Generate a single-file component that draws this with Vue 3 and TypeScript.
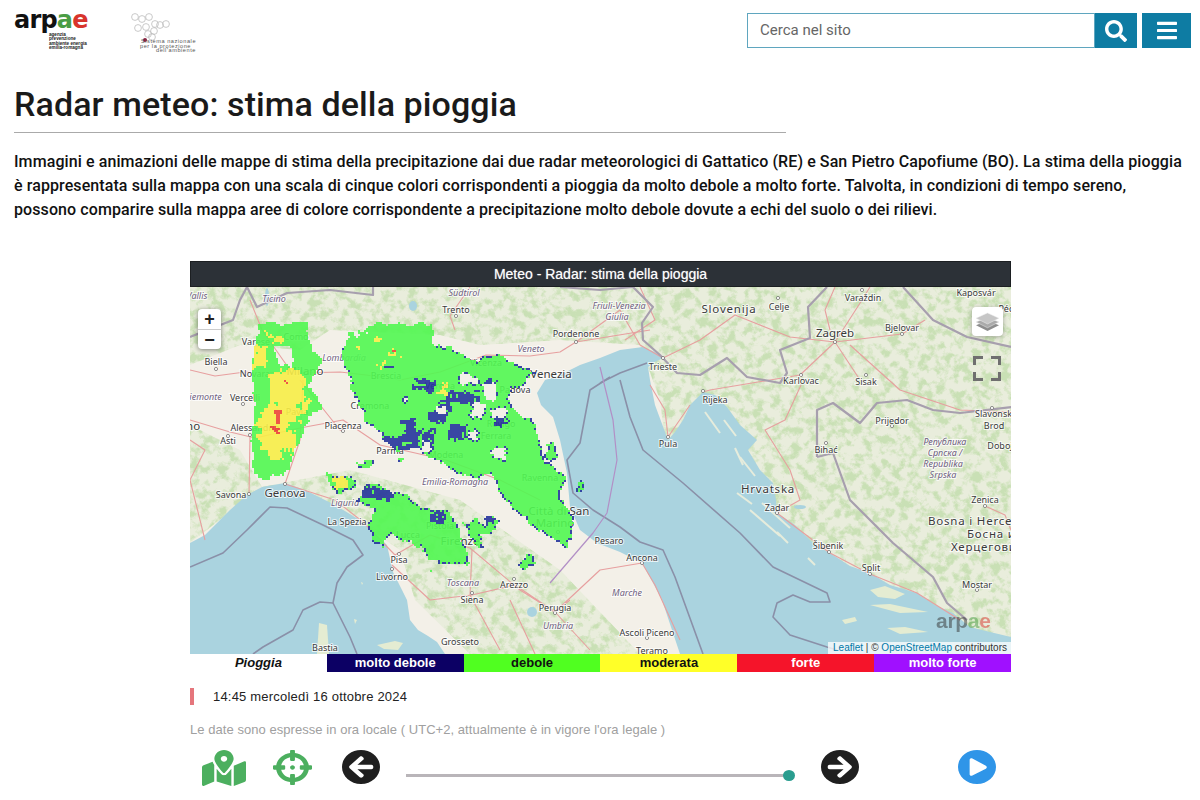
<script setup lang="ts">
type Pt = [number, number]
type Label = { t: string; x: number; y: number; s?: number; i?: boolean; ls?: number; a?: string }

const hash = (i: number, j: number): number => {
  const v = Math.sin(i * 12.9898 + j * 78.233) * 43758.5453
  return v - Math.floor(v)
}
const noise = (x: number, y: number): number => {
  const i = Math.floor(x)
  const j = Math.floor(y)
  const u = x - i
  const v = y - j
  const a = hash(i, j) * (1 - u) + hash(i + 1, j) * u
  const b = hash(i, j + 1) * (1 - u) + hash(i + 1, j + 1) * u
  return a * (1 - v) + b * v
}
const inside = (p: Pt[], x: number, y: number): boolean => {
  let c = false
  for (let k = 0, l = p.length - 1; k < p.length; l = k++) {
    const [xi, yi] = p[k]
    const [xj, yj] = p[l]
    if (yi > y !== yj > y && x < ((xj - xi) * (y - yi)) / (yj - yi) + xi) c = !c
  }
  return c
}
const box = (a: number, b: number, c: number, d: number): Pt[] => [[a, b], [c, b], [c, d], [a, d]]

const greenAreas: Pt[][] = [
  [[257, 323], [305, 323], [310, 347], [322, 360], [307, 380], [317, 400], [320, 410], [307, 418], [292, 460], [283, 475], [265, 478], [252, 470], [252, 357], [256, 340]],
  [[347, 332], [373, 323], [433, 323], [430, 343], [447, 347], [457, 350], [477, 362], [483, 355], [500, 353], [510, 360], [537, 373], [530, 377], [510, 390], [505, 400], [523, 417], [533, 417], [540, 440], [543, 460], [550, 463], [567, 477], [560, 493], [570, 517], [572, 537], [563, 548], [547, 533], [537, 530], [523, 517], [510, 507], [500, 493], [490, 473], [477, 477], [457, 470], [437, 460], [413, 450], [397, 450], [377, 430], [357, 407], [350, 383], [340, 353]],
  [[357, 500], [367, 482], [393, 490], [423, 505], [447, 513], [457, 530], [467, 550], [467, 565], [430, 560], [420, 550], [407, 537], [390, 535], [380, 545], [373, 540], [367, 527], [372, 510]],
  [[463, 523], [473, 518], [483, 522], [487, 513], [497, 517], [492, 530], [480, 533], [482, 548], [475, 547], [470, 538]],
  [[517, 563], [530, 554], [536, 560], [522, 570]],
  box(575, 480, 582, 489),
  box(545, 442, 556, 458),
  [[325, 472], [352, 476], [356, 488], [336, 491]],
  box(357, 460, 372, 467),
  box(397, 457, 403, 463),
  box(426, 568, 432, 572)
]
const holes: Pt[][] = [
  [[273, 343], [290, 345], [292, 367], [281, 365], [275, 355]],
  box(460, 375, 477, 382),
  box(472, 403, 483, 417),
  box(420, 440, 430, 450),
  box(490, 448, 503, 458),
  box(483, 383, 495, 397),
  box(492, 408, 505, 417),
  box(467, 430, 477, 437),
  box(437, 405, 445, 412),
  box(403, 395, 407, 399),
  box(363, 331, 367, 334),
  box(353, 330, 358, 336),
  box(408, 447, 420, 452)
]
const blueAreas: Pt[][] = [
  box(418, 374, 440, 387), box(453, 387, 483, 400), box(433, 407, 450, 417), box(407, 415, 420, 430),
  [[374, 429], [400, 433], [440, 423], [438, 445], [400, 447], [374, 437]],
  box(453, 420, 470, 437), box(388, 360, 396, 364), box(356, 484, 397, 496), box(373, 540, 387, 548),
  box(433, 510, 447, 520), box(483, 510, 497, 517), box(477, 480, 484, 490), box(498, 410, 512, 421), box(492, 377, 502, 386), box(440, 395, 455, 405)
]
const yellowAreas: Pt[][] = [
  [[270, 372], [300, 368], [303, 392], [308, 404], [298, 418], [295, 440], [287, 460], [270, 458], [257, 440], [258, 420], [266, 405]],
  box(253, 344, 266, 366), box(262, 331, 272, 335), box(273, 337, 285, 342),
  box(372, 338, 380, 343), box(387, 349, 397, 354), box(380, 361, 385, 367), box(355, 342, 360, 347), box(439, 381, 445, 393),
  [[327, 473], [346, 478], [348, 487], [334, 486]]
]
const greenInYellow: Pt[][] = [box(272, 398, 276, 402), box(286, 420, 296, 431), box(259, 449, 268, 458), box(282, 448, 288, 458), box(294, 402, 300, 408)]
const redAreas: Pt[][] = [box(275, 408, 280, 422), box(272, 425, 280, 431), box(284, 380, 286, 384), box(390, 350, 395, 352)]

const toPath = (test: (x: number, y: number) => boolean): string => {
  const size = 2
  let d = ''
  for (let y = 320; y < 575; y += size) {
    let start = -1
    for (let x = 248; x <= 590; x += size) {
      const on = x < 590 && test(x, y)
      if (on && start < 0) start = x
      if (!on && start >= 0) {
        d += `M${start} ${y}h${x - start}v${size}h${start - x}z`
        start = -1
      }
    }
  }
  return d
}
const warp = (x: number, y: number): Pt => [
  x + (noise(x / 7, y / 7) - 0.5) * 6 + (noise(x / 2.5, y / 2.5) - 0.5) * 3,
  y + (noise(x / 7 + 40, y / 7 + 17) - 0.5) * 6 + (noise(x / 2.5 + 9, y / 2.5 + 3) - 0.5) * 3
]
const any = (list: Pt[][], x: number, y: number): boolean => list.some((p) => inside(p, x, y))
const isRain = (x: number, y: number): boolean => {
  const [a, b] = warp(x, y)
  return any(greenAreas, a, b) && !any(holes, a, b)
}
const isEdge = (x: number, y: number): boolean =>
  !isRain(x - 2, y) || !isRain(x + 2, y) || !isRain(x, y - 2) || !isRain(x, y + 2)
const isBlue = (x: number, y: number): boolean => {
  if (!isRain(x, y)) return false
  const [a, b] = warp(x + 5, y - 3)
  return (any(blueAreas, a, b) && noise(x / 3, y / 3) > 0.25) || (isEdge(x, y) && y > 345 && x > 330 && hash(x, y) < 0.4)
}
const warp2 = (x: number, y: number): Pt => [x + (noise(x / 4, y / 4) - 0.5) * 9, y + (noise(x / 4 + 9, y / 4 + 3) - 0.5) * 9]
const isYellow = (x: number, y: number): boolean => {
  const [a, b] = warp2(x, y)
  return isRain(x, y) && any(yellowAreas, a, b) && !any(greenInYellow, a, b) && !isBlue(x, y)
}
const radar = {
  green: toPath((x, y) => isRain(x, y) && !isBlue(x, y)),
  blue: toPath(isBlue),
  yellow: toPath(isYellow),
  red: toPath((x, y) => any(redAreas, ...warp(x, y)))
}

const labels: Label[] = [
  { t: 'Vallis', x: 197, y: 299, i: true }, { t: 'Ticino', x: 274, y: 302, i: true }, { t: 'Südtirol', x: 464, y: 296, i: true },
  { t: 'Trento', x: 456, y: 313 }, { t: 'Friuli-Venezia', x: 619, y: 309, i: true }, { t: 'Giulia', x: 617, y: 320, i: true },
  { t: 'Pordenone', x: 576, y: 337 }, { t: 'Veneto', x: 531, y: 352, i: true }, { t: 'Como', x: 296, y: 340 },
  { t: 'Varese', x: 256, y: 345 }, { t: 'Biella', x: 216, y: 365 }, { t: 'Novara', x: 255, y: 377 },
  { t: 'Milano', x: 305, y: 375, s: 11.5 }, { t: 'Lombardia', x: 344, y: 361, i: true }, { t: 'Brescia', x: 386, y: 379 },
  { t: 'Vicenza', x: 486, y: 366 }, { t: 'Verona', x: 440, y: 389 }, { t: 'Padova', x: 515, y: 393 },
  { t: 'Venezia', x: 551, y: 378, s: 11.5 }, { t: 'Piemonte', x: 203, y: 400, i: true }, { t: 'Vercelli', x: 245, y: 401 },
  { t: 'Pavia', x: 297, y: 415 }, { t: 'Cremona', x: 370, y: 409 }, { t: 'Piacenza', x: 343, y: 429 },
  { t: 'Alessandria', x: 255, y: 431 }, { t: 'Torino', x: 183, y: 430, s: 11.5 }, { t: 'Asti', x: 228, y: 444 },
  { t: 'Parma', x: 390, y: 454 }, { t: 'Rovigo', x: 501, y: 427 }, { t: 'Ferrara', x: 496, y: 439 },
  { t: 'Modena', x: 446, y: 458 }, { t: 'Emilia-Romagna', x: 455, y: 485, i: true }, { t: 'Savona', x: 231, y: 498 },
  { t: 'Genova', x: 285, y: 497, s: 11.5 }, { t: 'Liguria', x: 345, y: 506, i: true }, { t: 'La Spezia', x: 347, y: 525 },
  { t: 'Ravenna', x: 540, y: 481 }, { t: 'Pistoia', x: 440, y: 529 }, { t: 'Lucca', x: 408, y: 538 },
  { t: 'Firenze', x: 460, y: 545, s: 11.5 }, { t: 'Città di San', x: 559, y: 515, s: 11.5 }, { t: 'Marino', x: 555, y: 527, s: 11.5 },
  { t: 'Pesaro', x: 609, y: 544 }, { t: 'Pisa', x: 399, y: 563 }, { t: 'Livorno', x: 392, y: 580 },
  { t: 'Toscana', x: 463, y: 586, i: true }, { t: 'Arezzo', x: 514, y: 588 }, { t: 'Siena', x: 472, y: 603 },
  { t: 'Perugia', x: 555, y: 611 }, { t: 'Umbria', x: 558, y: 629, i: true }, { t: 'Grosseto', x: 460, y: 645 },
  { t: 'Bastia', x: 325, y: 651 }, { t: 'Ancona', x: 642, y: 561 }, { t: 'Marche', x: 627, y: 596, i: true },
  { t: 'Ascoli Piceno', x: 647, y: 636 }, { t: 'Teramo', x: 652, y: 654 }, { t: 'Slovenija', x: 729, y: 313, s: 11.5, ls: 0.8 },
  { t: 'Celje', x: 779, y: 310 }, { t: 'Trieste', x: 663, y: 370 }, { t: 'Rijeka', x: 715, y: 403 }, { t: 'Pula', x: 668, y: 447 },
  { t: 'Zagreb', x: 835, y: 337, s: 11.5 }, { t: 'Varaždin', x: 863, y: 301 }, { t: 'Bjelovar', x: 902, y: 331 },
  { t: 'Karlovac', x: 801, y: 384 }, { t: 'Sisak', x: 866, y: 385 }, { t: 'Kaposvár', x: 976, y: 296 }, { t: 'Pécs', x: 1008, y: 312 },
  { t: 'Slavonski', x: 975, y: 417, a: 'start' }, { t: 'Brod', x: 994, y: 429 }, { t: 'Prijedor', x: 892, y: 424 }, { t: 'Bihać', x: 826, y: 453 },
  { t: 'Република', x: 945, y: 445, i: true }, { t: 'Српска /', x: 945, y: 456, i: true }, { t: 'Republika', x: 943, y: 467, i: true },
  { t: 'Srpska', x: 943, y: 478, i: true }, { t: 'Doboj', x: 1000, y: 449 }, { t: 'Zenica', x: 985, y: 503 },
  { t: 'Hrvatska', x: 768, y: 493, s: 11.5, ls: 0.8 }, { t: 'Zadar', x: 777, y: 511 }, { t: 'Šibenik', x: 828, y: 549 }, { t: 'Split', x: 871, y: 571 },
  { t: 'Bosna i Herceg', x: 928, y: 525, s: 11.5, ls: 0.8, a: 'start' }, { t: 'Босна и', x: 967, y: 538, s: 11.5, ls: 0.8, a: 'start' },
  { t: 'Херцегови', x: 951, y: 551, s: 11.5, ls: 0.8, a: 'start' }, { t: 'Mostar', x: 977, y: 588 }
]
const towns: Pt[] = [[456, 316], [576, 342], [216, 369], [243, 404], [343, 431], [228, 436], [250, 435], [249, 494], [285, 484], [399, 554], [392, 569], [514, 579], [472, 593], [555, 613], [642, 563], [647, 638], [663, 358], [668, 437], [703, 391], [778, 298], [835, 342], [862, 290], [902, 334], [801, 375], [866, 375], [992, 408], [892, 426], [826, 443], [777, 513], [829, 552], [870, 574], [985, 506], [977, 590], [558, 532]]

const seaWest = '190,543 205,535 230,510 247,495 262,487 285,483 305,490 335,505 363,522 380,538 387,545 391,563 393,572 402,590 407,600 410,620 418,630 428,636 437,642 445,654 190,654'
const seaEast = '537,393 545,380 558,376 580,365 600,358 620,350 643,347 655,352 663,358 655,362 648,367 650,380 655,405 668,440 675,432 683,420 690,405 703,392 715,395 727,407 740,425 757,440 748,450 760,470 773,483 776,500 777,513 795,525 815,545 830,553 850,566 870,573 890,585 917,593 935,605 953,613 970,627 990,632 1011,637 1011,654 680,654 672,630 662,600 653,583 642,563 620,552 597,543 580,530 570,507 567,473 560,440 553,417 541,405'

const roads: string[] = [
  '190,370 215,376 245,372 300,373 340,372 366,375', '190,420 230,432 255,438 300,428 343,420 380,445 446,460 500,480 540,500',
  '250,435 249,495', '285,484 300,440 303,380', '300,380 340,430 343,431', '285,484 335,500 363,522 395,555 430,535 470,548 520,590 555,612',
  '392,565 430,600 472,595 515,585 555,612', '472,550 470,595 500,650', '555,612 600,570 642,563 655,585 680,640',
  '455,330 450,316 470,287', '576,342 560,352 530,356 486,355 440,372 400,380 366,375', '576,342 620,310 640,345 663,358', '576,342 650,330',
  '663,358 700,340 735,315 790,337 835,342 860,380', '835,342 800,375 770,380 710,390 703,392', '835,342 862,300 870,287', '835,342 902,334 925,320',
  '850,345 900,390 960,410 1011,412', '801,385 785,420 765,430 790,470 800,500 777,513', '777,513 830,553 870,574 917,593 960,620',
  '650,385 665,410 668,437 690,405', '985,506 1005,515 1011,530', '640,287 655,320 625,340', '835,287 825,310 830,330', '570,600 555,612 590,650', '510,600 535,654', '205,540 190,480 205,450 190,440', '250,300 262,330 290,370'
]
const borders: string[] = [
  '633,287 653,307 642,323 643,340 660,355 677,373 700,375 727,358 747,377 780,383 787,373 780,350 810,338 808,307 827,287',
  '817,457 817,410 833,403 860,423 877,403 907,400 933,410 960,413 1013,407',
  '817,457 833,453 850,500 893,543 933,577 947,603 967,620', '903,287 933,320 967,337 1011,347',
  '190,337 233,320 240,300 247,287', '247,287 257,307 287,293 330,290 373,295 373,287', '560,287 600,290 633,287'
]
const seaLines: string[] = [
  '190,567 223,553 247,530 270,507 287,508 323,525 353,540 363,555 347,567 337,583 333,603 350,637 357,654',
  '333,603 320,602 303,610 293,630 263,647 253,654',
  '610,377 590,390 580,443 567,460 573,493 593,510 620,527 640,542 663,550 675,577 687,610 703,654',
  '600,383 620,373 647,363', '620,380 630,417 643,450 683,483 740,533 773,567 827,593 830,602 810,602 793,595 777,603 773,617 790,635 827,647 837,650'
]
const islands: string[] = [
  '870,590 885,586 905,594 895,599 878,597', '870,605 890,604 928,612 900,613', '842,620 855,617 857,621 845,624', '887,628 905,627 928,632 900,634',
  '319,623 327,625 329,654 317,654', '377,645 395,641 403,643 398,650 384,649', '354,619 357,620 355,624', '361,582 363,583 362,585'
]
const islets: string[] = [
  '740,457 755,476', '737,493 752,504', '750,510 780,536', '762,503 790,528', '705,412 720,433', '724,420 736,436', '735,448 743,465', '808,558 815,565', '777,532 788,543'
]
const hexes: Pt[] = [[135, 15], [149, 15], [142, 17], [155, 22], [166, 22], [138, 26], [146, 25], [154, 29], [160, 23], [148, 32], [152, 35]]
const legend = [
  { t: 'molto debole', c: 'navy' }, { t: 'debole', c: 'lime' }, { t: 'moderata', c: 'yel' }, { t: 'forte', c: 'red' }, { t: 'molto forte', c: 'pur' }
]
</script>

<template>
  <div class="page">
    <header class="top">
      <div class="logos">
        <div class="arpae">
          <div class="word"><span>arp</span><span class="g">a</span><span class="r">e</span></div>
          <div class="sub">agenzia<br />prevenzione<br />ambiente energia<br />emilia-romagna</div>
        </div>
        <div class="snpa">
          <svg width="42" height="30" viewBox="130 10 42 30">
            <circle v-for="(h, i) in hexes" :key="i" :cx="h[0]" :cy="h[1]" r="3.4" fill="none" stroke="#bdbdbd" stroke-width="0.8" />
            <circle cx="145" cy="38" r="2" fill="#8c1c3c" />
          </svg>
          <div class="snpa-t"><div>Sistema nazionale</div><div class="l2">per la protezione</div><div class="l3">dell'ambiente</div></div>
        </div>
      </div>
      <div class="tools">
        <div class="search">Cerca nel sito</div>
        <button class="btn b-search" aria-label="Cerca">
          <svg width="22" height="22" viewBox="0 0 512 512"><path fill="#fff" d="M505 442.7L405.3 343c-4.5-4.5-10.6-7-17-7H372c27.6-35.3 44-79.7 44-128C416 93.1 322.9 0 208 0S0 93.1 0 208s93.1 208 208 208c48.3 0 92.7-16.4 128-44v16.3c0 6.4 2.5 12.5 7 17l99.7 99.7c9.4 9.4 24.6 9.4 33.9 0l28.3-28.3c9.4-9.4 9.4-24.6.1-34zM208 336c-70.7 0-128-57.2-128-128 0-70.7 57.2-128 128-128 70.7 0 128 57.2 128 128 0 70.7-57.2 128-128 128z" /></svg>
        </button>
        <button class="btn b-menu" aria-label="Menu">
          <svg width="20" height="23" viewBox="0 0 448 512"><path fill="#fff" d="M16 132h416c8.837 0 16-7.163 16-16V76c0-8.837-7.163-16-16-16H16C7.163 60 0 67.163 0 76v40c0 8.837 7.163 16 16 16zm0 160h416c8.837 0 16-7.163 16-16v-40c0-8.837-7.163-16-16-16H16c-8.837 0-16 7.163-16 16v40c0 8.837 7.163 16 16 16zm0 160h416c8.837 0 16-7.163 16-16v-40c0-8.837-7.163-16-16-16H16c-8.837 0-16 7.163-16 16v40c0 8.837 7.163 16 16 16z" /></svg>
        </button>
      </div>
    </header>

    <h1>Radar meteo: stima della pioggia</h1>
    <p class="intro">Immagini e animazioni delle mappe di stima della precipitazione dai due radar meteorologici di Gattatico (RE) e San Pietro Capofiume (BO). La stima della pioggia<br />è rappresentata sulla mappa con una scala di cinque colori corrispondenti a pioggia da molto debole a molto forte. Talvolta, in condizioni di tempo sereno,<br />possono comparire sulla mappa aree di colore corrispondente a precipitazione molto debole dovute a echi del suolo o dei rilievi.</p>

    <section class="viewer">
      <div class="bar-title">Meteo - Radar: stima della pioggia</div>
      <div class="map">
        <svg class="tiles" width="821" height="367" viewBox="190 287 821 367">
          <defs>
            <filter id="terrain" x="0" y="0" width="100%" height="100%" color-interpolation-filters="sRGB">
              <feTurbulence type="fractalNoise" baseFrequency="0.11" numOctaves="5" seed="7" />
              <feColorMatrix type="matrix" values="0 0 0 0 0.79  0 0 0 0 0.88  0 0 0 0 0.71  4.500 0 0 0 -2" />
            </filter>
            <clipPath id="mount">
              <polygon points="190,287 1011,287 1011,654 690,654 660,400 640,345 560,340 480,345 440,335 330,330 300,350 240,345 190,365" />
              <polygon points="190,425 240,450 262,487 350,470 460,500 560,570 640,654 470,654 415,600 400,550 340,510 262,487 190,543" />
            </clipPath>
          </defs>
          <rect x="190" y="287" width="821" height="367" fill="#f3f0e8" />
          <g clip-path="url(#mount)">
            <rect x="190" y="287" width="821" height="367" fill="#e9eddc" />
            <rect x="190" y="287" width="821" height="367" filter="url(#terrain)" />
          </g>
          <polygon :points="seaWest" fill="#aad3df" />
          <polygon :points="seaEast" fill="#aad3df" />
          <polygon v-for="(p, i) in islands" :key="'is' + i" :points="p" fill="#e4ecd2" />
          <polyline v-for="(p, i) in islets" :key="'il' + i" :points="p" fill="none" stroke="#e6ecdc" stroke-width="2" />
          <circle cx="532" cy="612" r="5" fill="#aad3df" />
          <ellipse cx="413" cy="306" rx="4" ry="5" fill="#aad3df" />
          <ellipse cx="800" cy="507" rx="6" ry="2" fill="#aad3df" />
          <ellipse cx="267" cy="297" rx="2" ry="9" fill="#aad3df" />
          <g fill="none" stroke-linejoin="round">
            <polyline v-for="(p, i) in roads" :key="'r' + i" :points="p" stroke="#e79f9f" stroke-width="1.1" />
            <polyline v-for="(p, i) in borders" :key="'b' + i" :points="p" stroke="#a79fae" stroke-width="2.2" />
            <polyline v-for="(p, i) in seaLines" :key="'s' + i" :points="p" stroke="#8a90a8" stroke-width="1.6" />
            <polyline points="600,367 613,420 617,460 607,513 593,533 550,583" stroke="#b28fc6" stroke-width="1.2" />
          </g>
          <g fill="#fff" stroke="#666" stroke-width="0.7">
            <circle v-for="(p, i) in towns" :key="'t' + i" :cx="p[0]" :cy="p[1]" r="1.6" />
          </g>
          <text
            v-for="l in labels"
            :key="l.t"
            class="lbl"
            :class="{ ital: l.i }"
            :x="l.x"
            :y="l.y"
            :font-size="l.s ?? 9"
            :letter-spacing="l.ls ?? 0"
            :text-anchor="l.a ?? 'middle'"
          >{{ l.t }}</text>
          <g opacity="0.9" shape-rendering="crispEdges">
            <path :d="radar.green" fill="#52f852" />
            <path :d="radar.blue" fill="#25359c" />
            <path :d="radar.yellow" fill="#f8ee48" />
            <path :d="radar.red" fill="#ee4636" />
          </g>
        </svg>
        <div class="zoom"><span>+</span><span class="minus">−</span></div>
        <div class="layers">
          <svg width="25" height="22" viewBox="0 0 26 23">
            <path d="M13 10 25 15 13 21 1 15z" fill="#8d8d8d" /><path d="M13 6.500 25 11.500 13 17.500 1 11.500z" fill="#aaa" stroke="#eee" stroke-width=".5" /><path d="M13 2 25 7.500 13 13.500 1 7.500z" fill="#c6c6c6" stroke="#eee" stroke-width=".5" />
          </svg>
        </div>
        <svg class="full" width="28" height="25" viewBox="0 0 28 25">
          <path d="M1.500 9V1.500H10M18 1.500h8.500V9M26.500 16v7.500H18M10 23.500H1.500V16" fill="none" stroke="#6f6f6f" stroke-width="3" />
        </svg>
        <div class="mark"><span>arp</span><span class="g">a</span><span class="r">e</span></div>
        <div class="attrib"><span class="a">Leaflet</span> | © <span class="a">OpenStreetMap</span> contributors</div>
      </div>
      <div class="legend">
        <div class="cell head">Pioggia</div>
        <div v-for="l in legend" :key="l.t" class="cell" :class="l.c">{{ l.t }}</div>
      </div>
      <div class="date">14:45 mercoledì 16 ottobre 2024</div>
      <div class="note">Le date sono espresse in ora locale ( UTC+2, attualmente è in vigore l'ora legale )</div>
      <div class="controls">
        <svg class="i-map" width="44" height="36" viewBox="0 0 576 512" preserveAspectRatio="none"><path fill="#4caf5f" d="M288 0c-69.59 0-126 56.41-126 126 0 56.26 82.35 158.8 113.9 196.02 6.39 7.54 17.82 7.54 24.2 0C331.65 284.8 414 182.26 414 126 414 56.41 357.59 0 288 0zm0 168c-23.2 0-42-18.8-42-42s18.8-42 42-42 42 18.8 42 42-18.8 42-42 42zM20.12 215.95A32.006 32.006 0 0 0 0 245.66v250.32c0 11.32 11.43 19.06 21.94 14.86L160 448V214.92c-8.84-15.98-16.07-31.54-21.25-46.42L20.12 215.95zM288 359.67c-14.07 0-27.38-6.18-36.51-16.96-19.66-23.2-40.57-49.62-59.49-76.72V448l192 64V266c-18.92 27.09-39.82 53.52-59.49 76.72-9.13 10.77-22.44 16.95-36.51 16.95zm266.06-198.51L416 224v288l139.88-55.95A31.996 31.996 0 0 0 576 426.34V176.02c0-11.32-11.43-19.06-21.94-14.86z" /></svg>
        <svg class="i-aim" width="39" height="35" viewBox="0 0 512 512" preserveAspectRatio="none"><path fill="#4caf5f" d="M500 224h-30.364C455.724 130.325 381.675 56.276 288 42.364V12c0-6.627-5.373-12-12-12h-40c-6.627 0-12 5.373-12 12v30.364C130.325 56.276 56.276 130.325 42.364 224H12c-6.627 0-12 5.373-12 12v40c0 6.627 5.373 12 12 12h30.364C56.276 381.675 130.325 455.724 224 469.636V500c0 6.627 5.373 12 12 12h40c6.627 0 12-5.373 12-12v-30.364C381.675 455.724 455.724 381.675 469.636 288H500c6.627 0 12-5.373 12-12v-40c0-6.627-5.373-12-12-12zM288 404.634V364c0-6.627-5.373-12-12-12h-40c-6.627 0-12 5.373-12 12v40.634C165.826 392.232 119.783 346.243 107.366 288H148c6.627 0 12-5.373 12-12v-40c0-6.627-5.373-12-12-12h-40.634C119.768 165.826 165.757 119.783 224 107.366V148c0 6.627 5.373 12 12 12h40c6.627 0 12-5.373 12-12v-40.634C346.174 119.768 392.217 165.757 404.634 224H364c-6.627 0-12 5.373-12 12v40c0 6.627 5.373 12 12 12h40.634C392.232 346.174 346.243 392.217 288 404.634zM288 256c0 17.673-14.327 32-32 32s-32-14.327-32-32c0-17.673 14.327-32 32-32s32 14.327 32 32z" /></svg>
        <svg class="i-prev" width="38" height="34" viewBox="8 8 496 496" preserveAspectRatio="none"><path fill="#1f1f1f" d="M256 504C119 504 8 393 8 256S119 8 256 8s248 111 248 248-111 248-248 248zm28.9-143.600L209.400 288H392c13.300 0 24-10.700 24-24v-16c0-13.300-10.700-24-24-24H209.400l75.500-72.400c9.700-9.300 9.900-24.800.4-34.300l-11-10.900c-9.400-9.400-24.600-9.400-33.900 0L107.700 239c-9.400 9.400-9.400 24.600 0 33.900l132.700 132.700c9.400 9.400 24.600 9.400 33.900 0l11-10.900c9.500-9.500 9.300-25-.4-34.300z" /></svg>
        <div class="slider"><span class="thumb"></span></div>
        <svg class="i-next" width="38" height="34" viewBox="8 8 496 496" preserveAspectRatio="none"><path fill="#1f1f1f" d="M256 8c137 0 248 111 248 248S393 504 256 504 8 393 8 256 119 8 256 8zm-28.900 143.600l75.500 72.400H120c-13.300 0-24 10.700-24 24v16c0 13.300 10.700 24 24 24h182.600l-75.500 72.400c-9.700 9.300-9.900 24.800-.4 34.300l11 10.900c9.400 9.400 24.600 9.400 33.900 0L404.300 273c9.400-9.400 9.400-24.600 0-33.900L271.600 106.300c-9.400-9.400-24.600-9.400-33.900 0l-11 10.900c-9.500 9.600-9.300 25.100.4 34.400z" /></svg>
        <svg class="i-play" width="38" height="34" viewBox="8 8 496 496" preserveAspectRatio="none"><path fill="#2f95e8" d="M256 8C119 8 8 119 8 256s111 248 248 248 248-111 248-248S393 8 256 8zm115.700 272l-176 101c-15.800 8.800-35.700-2.500-35.700-21V152c0-18.400 19.800-29.800 35.700-21l176 107c16.400 9.200 16.400 32.900 0 42z" /></svg>
      </div>
    </section>
  </div>
</template>

<style>
html, body { margin: 0; background: #fff; }
</style>

<style scoped>
.page { width: 1200px; height: 800px; overflow: hidden; font-family: Roboto, "Noto Sans", sans-serif; color: #111; }
.top { display: flex; justify-content: space-between; padding: 10px 9px 0 14px; height: 48px; box-sizing: content-box; }
.logos { display: flex; gap: 42px; }
.arpae { width: 74px; }
.word { font: 700 24px/20px "DejaVu Sans", sans-serif; letter-spacing: -.8px; color: #111; height: 20px; }
.g { color: #4a9d45; }
.r { color: #d8342c; }
.sub { font: 700 4.6px/4.300px "Liberation Sans", sans-serif; margin-left: 35px; margin-top: 3px; white-space: nowrap; color: #222; }
.snpa { position: relative; width: 70px; margin-top: 2px; }
.snpa svg { display: block; }
.snpa-t { font: 400 5.600px/4.500px "Liberation Sans", sans-serif; color: #555; margin-top: -3px; margin-left: 11px; white-space: nowrap; letter-spacing: .55px; }
.l2 { margin-left: -1px; }
.l3 { margin-left: 15px; }
.tools { display: flex; padding-top: 3px; height: 35px; }
.search { width: 348px; height: 35px; box-sizing: border-box; border: 1px solid #5fa6bf; padding-left: 12px; font: 400 15px/33px Roboto, sans-serif; color: #666; }
.btn { border: 0; padding: 0; height: 35px; background: #0e7ca3; display: flex; align-items: center; justify-content: center; }
.b-search { width: 42px; }
.b-menu { width: 49px; margin-left: 5px; }
h1 { margin: 26px 0 0 14px; width: 772px; height: 49px; box-sizing: border-box; border-bottom: 1px solid #aaa; font: 500 34px/40px Roboto, sans-serif; letter-spacing: .1px; color: #1a1a1a; }
.intro { margin: 17px 0 0 14px; width: 1175px; font: 500 16px/24px Roboto, sans-serif; letter-spacing: .09px; color: #111; white-space: nowrap; }
.viewer { margin: 39px 0 0 190px; width: 821px; font-family: "Liberation Sans", Arial, sans-serif; }
.bar-title { height: 26px; background: #2c3137; color: #fff; text-align: center; font-size: 14px; line-height: 25px; border: 1px solid #1c1f22; box-sizing: border-box; text-shadow: 0 0 1px rgba(255,255,255,.6); }
.map { position: relative; height: 367px; overflow: hidden; }
.tiles { display: block; }
.lbl { font-family: "Noto Sans", sans-serif; fill: #3a3a3a; stroke: rgba(255,255,255,.75); stroke-width: 2px; paint-order: stroke; }
.ital { font-style: italic; fill: #6f5f80; }
.zoom { position: absolute; left: 8px; top: 22px; width: 23px; height: 40px; background: #fff; border-radius: 4px; box-shadow: 0 1px 5px rgba(0,0,0,.45); display: flex; flex-direction: column; font: 700 18px/20px "Liberation Sans", sans-serif; text-align: center; color: #222; }
.zoom span { height: 20px; }
.minus { border-top: 1px solid #ccc; box-sizing: border-box; }
.layers { position: absolute; left: 782px; top: 20px; width: 31px; height: 29px; background: #fff; border-radius: 4px; box-shadow: 0 1px 5px rgba(0,0,0,.3); display: flex; align-items: center; justify-content: center; }
.full { position: absolute; left: 783px; top: 69px; }
.mark { position: absolute; left: 746px; top: 321px; font: 700 21px/26px "Liberation Sans", sans-serif; letter-spacing: -.3px; color: #333; opacity: .5; }
.attrib { position: absolute; right: 0; bottom: 0; height: 12px; padding: 0 4px 0 5px; background: rgba(255,255,255,.75); font-size: 10px; line-height: 12px; color: #333; white-space: nowrap; }
.a { color: #0078a8; }
.legend { display: grid; grid-template-columns: repeat(6, 1fr); height: 18px; }
.cell { text-align: center; font-size: 13px; font-weight: 700; line-height: 17px; box-sizing: border-box; }
.head { font-style: italic; color: #111; }
.navy { background: #0c0064; color: #fff; }
.lime { background: #50ff20; color: #111; }
.yel { background: #ffff28; color: #111; }
.red { background: #f5142a; color: #fff; }
.pur { background: #a010ff; color: #fff; }
.date { margin-top: 16px; height: 17px; border-left: 4px solid #e5767c; padding-left: 19px; font-size: 13px; line-height: 17px; color: #222; letter-spacing: .2px; }
.note { margin-top: 17px; font-size: 13px; line-height: 16px; color: #a0a0a0; letter-spacing: .05px; }
.controls { display: flex; align-items: flex-start; margin-top: 12px; padding-left: 12px; height: 40px; }
.i-aim { margin-left: 27px; }
.i-prev { margin-left: 30px; }
.slider { position: relative; width: 383px; height: 3px; background: #b9b5b9; margin: 24px 0 0 26px; }
.thumb { position: absolute; right: -6px; top: -4px; width: 12px; height: 11px; border-radius: 50%; background: #2a9d8f; }
.i-next { margin-left: 32px; }
.i-play { margin-left: 99px; }
</style>
